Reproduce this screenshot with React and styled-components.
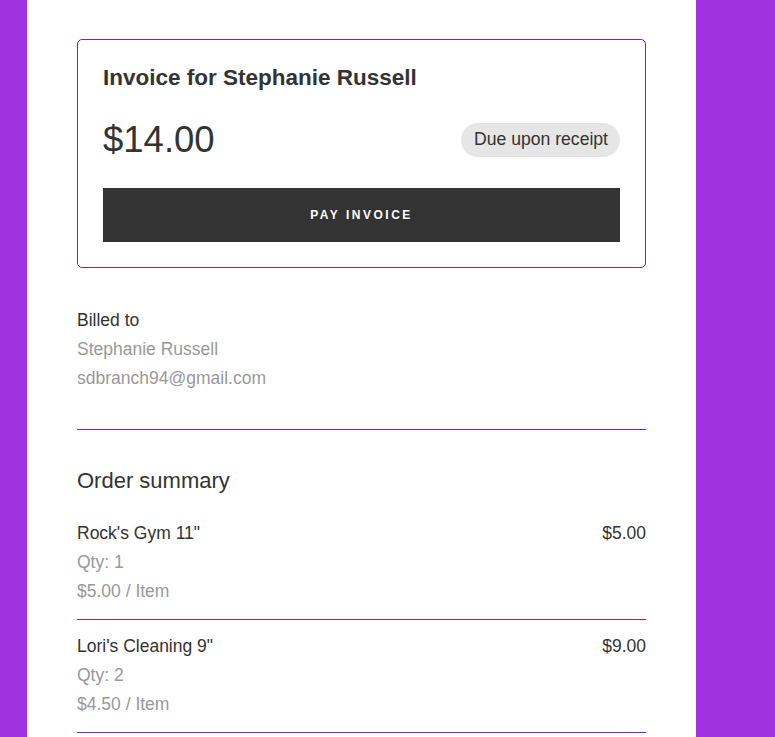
import React from 'react';
import styled, { createGlobalStyle } from 'styled-components';

const GlobalStyle = createGlobalStyle`
  html, body {
    margin: 0;
    padding: 0;
    background: #9f31e0;
    font-family: "Liberation Sans", Arial, sans-serif;
    color: #333;
  }
`;

const Page = styled.div`
  display: flex;
  min-height: 737px;
  padding-left: 27px;
`;

const Panel = styled.main`
  width: 669px;
  background: #fff;
  box-sizing: border-box;
  padding: 39px 50px 40px;
`;

const Card = styled.section`
  border: 1px solid #7a24b8;
  border-radius: 5px;
  padding: 25px;
`;

const Title = styled.h2`
  margin: 0 0 28px;
  font-size: 22.5px;
  font-weight: 700;
  line-height: 26px;
  color: #333;
`;

const AmountRow = styled.div`
  display: flex;
  align-items: center;
  justify-content: space-between;
  height: 41px;
  margin-bottom: 28px;
`;

const Amount = styled.div`
  font-size: 36.5px;
  line-height: 41px;
`;

const Badge = styled.span`
  display: inline-flex;
  align-items: center;
  height: 34px;
  padding: 0 12px 0 13px;
  border-radius: 17px;
  background: #e6e6e6;
  font-size: 17.6px;
  color: #333;
`;

const PayButton = styled.button`
  display: block;
  width: 100%;
  height: 54px;
  border: 0;
  background: #333;
  color: #fff;
  font-family: "Liberation Sans", Arial, sans-serif;
  font-size: 12px;
  font-weight: 700;
  letter-spacing: 2.5px;
  text-transform: uppercase;
  cursor: pointer;
`;

const Section = styled.section`
  padding-top: ${p => p.$top}px;
  padding-bottom: ${p => p.$bottom}px;
  border-bottom: ${p => (p.$divider ? '1px solid #7a24b8' : 'none')};
`;

const Line = styled.div`
  font-size: 17.5px;
  line-height: 29px;
  color: ${p => (p.$muted ? '#999' : '#333')};
`;

const Heading = styled.h3`
  margin: 0 0 14px;
  font-size: 22px;
  font-weight: 400;
  line-height: 25px;
  color: #333;
`;

const Item = styled.div`
  display: flex;
  justify-content: space-between;
  padding: 12px 0 13px;
  border-bottom: 1px solid #7a24b8;
`;

const items = [
  { name: 'Rock\'s Gym 11"', qty: 1, unit: '$5.00', total: '$5.00' },
  { name: 'Lori\'s Cleaning 9"', qty: 2, unit: '$4.50', total: '$9.00' },
];

export default function App() {
  return (
    <>
      <GlobalStyle />
      <Page>
        <Panel>
          <Card>
            <Title>Invoice for Stephanie Russell</Title>
            <AmountRow>
              <Amount>$14.00</Amount>
              <Badge>Due upon receipt</Badge>
            </AmountRow>
            <PayButton>Pay invoice</PayButton>
          </Card>

          <Section $top={38} $bottom={36} $divider>
            <Line>Billed to</Line>
            <Line $muted>Stephanie Russell</Line>
            <Line $muted>sdbranch94@gmail.com</Line>
          </Section>

          <Section $top={38} $bottom={0}>
            <Heading>Order summary</Heading>
            {items.map(it => (
              <Item key={it.name}>
                <div>
                  <Line>{it.name}</Line>
                  <Line $muted>Qty: {it.qty}</Line>
                  <Line $muted>{it.unit} / Item</Line>
                </div>
                <Line>{it.total}</Line>
              </Item>
            ))}
          </Section>
        </Panel>
      </Page>
    </>
  );
}
